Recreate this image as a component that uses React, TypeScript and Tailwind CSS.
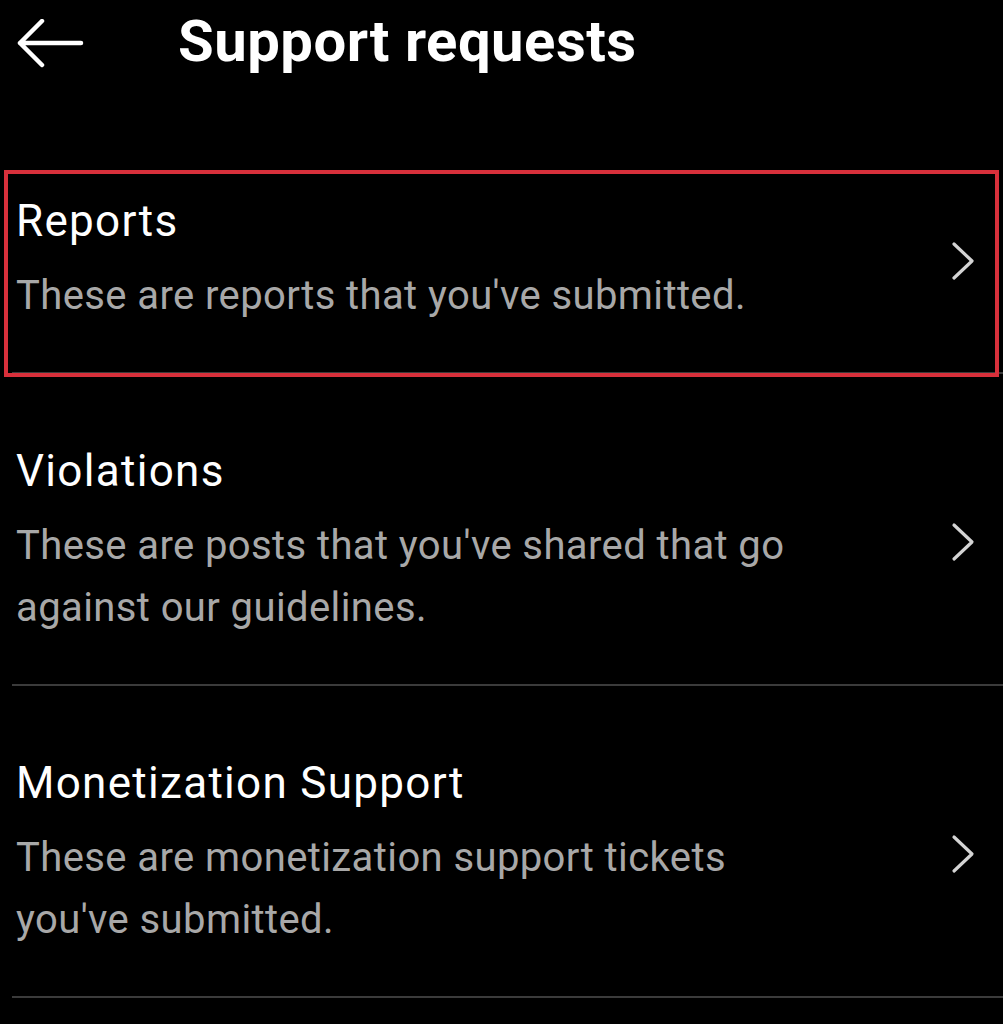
import React from "react";

const items = [
  {
    title: "Reports",
    text: "These are reports that you've submitted.",
  },
  {
    title: "Violations",
    text: "These are posts that you've shared that go against our guidelines.",
  },
  {
    title: "Monetization Support",
    text: "These are monetization support tickets you've submitted.",
  },
];

const BackArrow = () => (
  <svg width="70" height="54" viewBox="0 0 70 54" fill="none">
    <path
      d="M66 24H5M27 2L5 24l22 22"
      stroke="#fff"
      strokeWidth="4.5"
      strokeLinecap="round"
      strokeLinejoin="round"
    />
  </svg>
);

const Chevron = () => (
  <svg width="26" height="40" viewBox="0 0 26 40" fill="none">
    <path
      d="M4 3l18 17L4 37"
      stroke="#d4d4d4"
      strokeWidth="3.2"
      strokeLinecap="round"
      strokeLinejoin="round"
    />
  </svg>
);

const App = () => {
  return (
    <main
      className="min-h-[1024px] w-[1003px] bg-black text-white"
      style={{ fontFamily: "Roboto, 'Liberation Sans', sans-serif" }}
    >
      <header className="flex h-[124px] items-start pt-[3px]">
        <div className="ml-[15px] mt-[16px]">
          <BackArrow />
        </div>
        <h1 className="ml-[93px] text-[58px] font-bold leading-[76px] tracking-[0.5px]">
          Support requests
        </h1>
      </header>

      <div className="relative">
        {items.map((item) => (
          <div key={item.title}>
            <div className="flex items-center pl-[16px] pr-[27px] pt-[71px] pb-[45px]">
              <div className="flex-1">
                <h2 className="text-[44px] font-normal leading-[52px] tracking-[1.3px]">
                  {item.title}
                </h2>
                <p className="mt-[18px] max-w-[810px] text-[40px] leading-[62px] tracking-[0.4px] text-[#a8a8a8]">
                  {item.text}
                </p>
              </div>
              <Chevron />
            </div>
            <div className="ml-[12px] h-[2px] bg-[#3b3b3b]" />
          </div>
        ))}

        {/* highlight box drawn over the first row */}
        <div className="absolute left-[4px] top-[46px] h-[207px] w-[995px] border-4 border-[#d8303b]" />
      </div>
    </main>
  );
};

export default App;
